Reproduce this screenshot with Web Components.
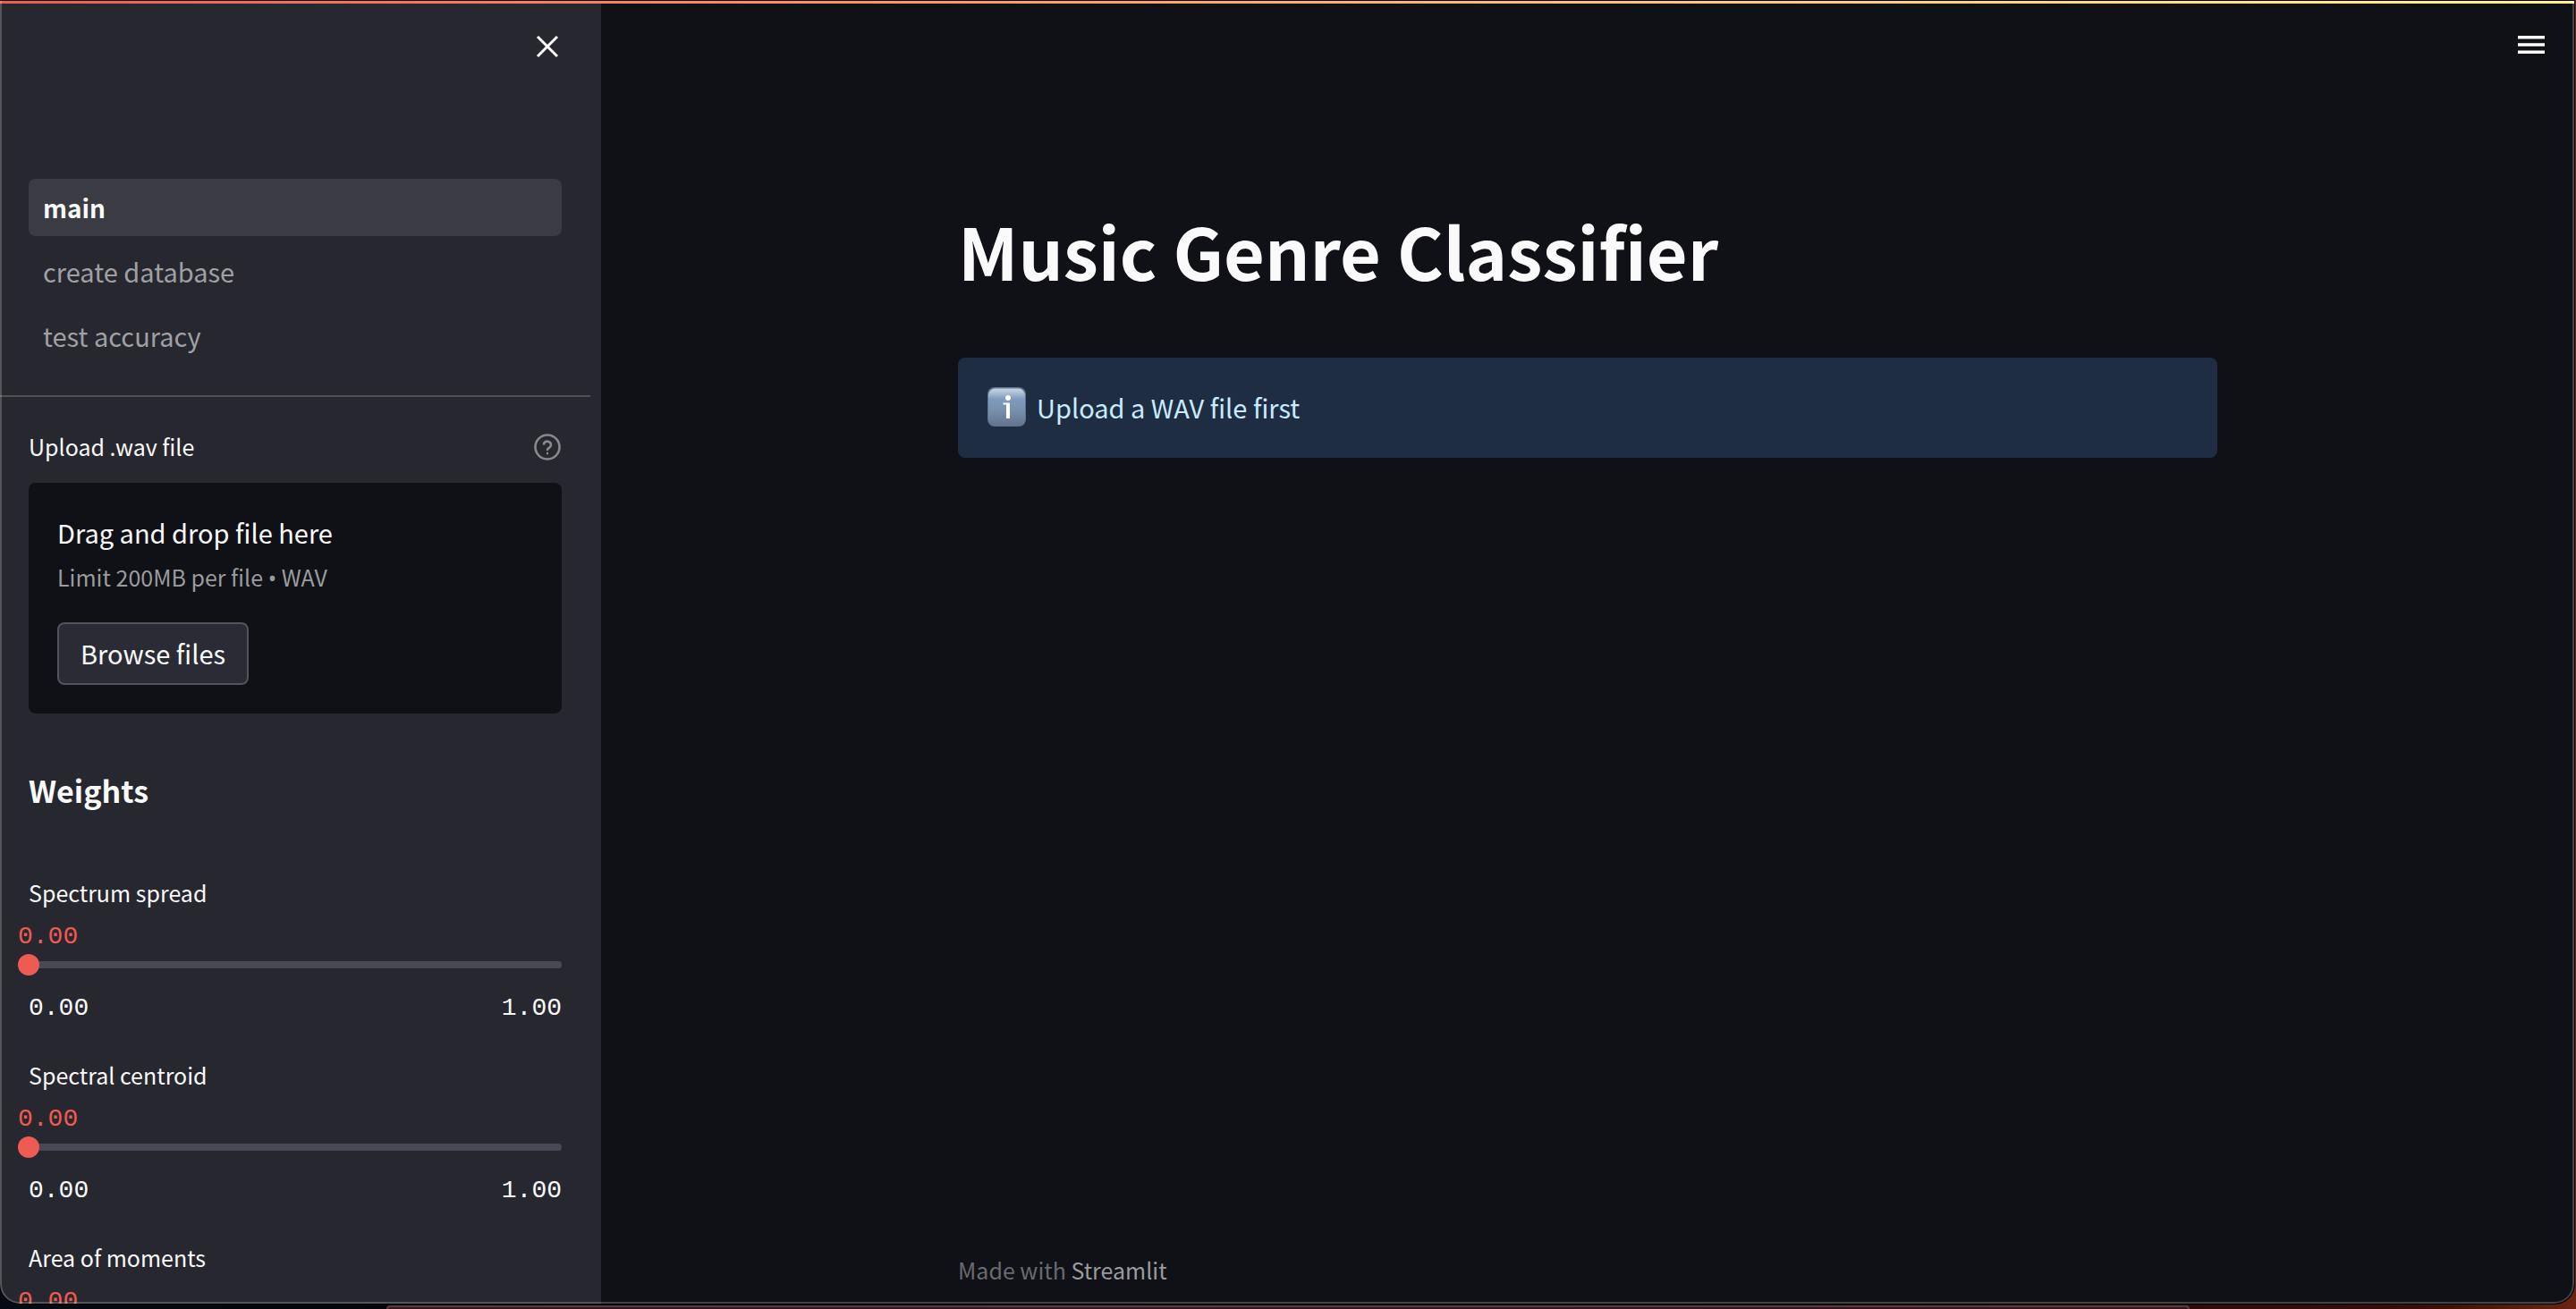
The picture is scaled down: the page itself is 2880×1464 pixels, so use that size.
<!DOCTYPE html>
<html lang="en">
<head>
<meta charset="utf-8">
<title>Music Genre Classifier</title>
<style>
  html, body { margin: 0; height: 100%; background: #000; overflow: hidden; }
  body { font-family: "Noto Sans CJK SC", "Noto Sans", sans-serif; color: #fafafa; }
</style>
</head>
<body>
<app-window>
  <side-bar slot="sidebar">
    <nav-item slot="nav" href="#main" current>main</nav-item>
    <nav-item slot="nav" href="#create">create database</nav-item>
    <nav-item slot="nav" href="#accuracy">test accuracy</nav-item>
    <file-uploader label="Upload .wav file"></file-uploader>
    <section-title>Weights</section-title>
    <weight-slider label="Spectrum spread"></weight-slider>
    <weight-slider label="Spectral centroid"></weight-slider>
    <weight-slider label="Area of moments"></weight-slider>
  </side-bar>
  <main-view>
    <page-title>Music Genre Classifier</page-title>
    <info-alert>Upload a WAV file first</info-alert>
  </main-view>
</app-window>
<script>
const define = (name, html, setup) => {
  const template = document.createElement('template');
  template.innerHTML = '<style>:host,*{box-sizing:border-box}button{font:inherit;color:inherit;cursor:pointer}svg{display:block}</style>' + html;
  customElements.define(name, class extends HTMLElement {
    connectedCallback() {
      if (this.shadowRoot) return;
      const root = this.attachShadow({ mode: 'open' });
      root.append(template.content.cloneNode(true));
      if (setup) setup(this, root);
    }
  });
};

define('app-window', `
<style>
  :host { display: block; position: relative; height: 100vh; padding: 1px 2px 6px 0; overflow: hidden;
    background: linear-gradient(90deg, #050b14 0, #040508 20%, #150506 35%, #220a08 70%, #350f08 94%, #6b2412 100%); }
  .window { position: relative; display: flex; flex-direction: column; height: 100%; overflow: hidden;
    border-radius: 0 0 22px 22px; background: #101116; box-shadow: 0 0 0 1px #000; }
  .window::after { content: ""; position: absolute; inset: 0; border: 2px solid rgba(255,255,255,.21);
    border-top: 0; border-radius: inherit; pointer-events: none; }
  .stripe { flex: none; height: 3px; background: linear-gradient(90deg, #f05a50, #ff8c61 30%, #ffc575 65%, #fff38c); }
  .body { flex: 1; display: flex; min-height: 0; }
  .dock { position: absolute; left: 15%; right: 15%; bottom: 0; height: 4px; background: #32171c;
    border: 2px solid #583a40; border-bottom: 0; border-radius: 14px 14px 0 0; }
</style>
<div class="window"><div class="stripe"></div><div class="body"><slot name="sidebar"></slot><slot></slot></div></div>
<div class="dock"></div>`);

define('side-bar', `
<style>
  :host { display: flex; flex-direction: column; flex: none; width: 672px; background: #27272f; overflow: hidden auto; scrollbar-width: none; }
  header { flex: none; height: 196px; padding: 32px 44px; display: flex; justify-content: flex-end; align-items: flex-start; }
  header button { padding: 0; border: 0; background: none; width: 32px; height: 32px; }
  nav { flex: none; display: flex; flex-direction: column; gap: 8px; padding: 0 44px 34px 32px; }
  hr { flex: none; margin: 0 12px 36px 0; border: 0; height: 2px; background: #505157; }
  .content { flex: none; padding: 0 44px 0 32px; }
</style>
<header><button aria-label="Close sidebar"><svg width="32" height="32" viewBox="0 0 32 32" fill="none" stroke="#fff" stroke-width="3"><path d="M5 5 27 27M27 5 5 27"/></svg></button></header>
<nav><slot name="nav"></slot></nav>
<hr>
<div class="content"><slot></slot></div>`);

define('nav-item', `
<style>
  :host { display: block; }
  a { display: block; height: 64px; line-height: 62px; padding: 0 16px; border-radius: 8px; font-size: 29px; color: #a0a0a4; text-decoration: none; }
  :host([current]) a { background: #3b3b44; color: #fafafa; font-size: 28px; line-height: 64px; font-weight: 700; }
</style>
<a><slot></slot></a>`, (el, root) => {
  const a = root.querySelector('a');
  a.href = el.getAttribute('href');
  if (el.hasAttribute('current')) a.setAttribute('aria-current', 'page');
});

define('file-uploader', `
<style>
  :host { display: block; margin-bottom: 62px; }
  .row { display: flex; justify-content: space-between; align-items: center; height: 40px; margin-bottom: 20px; }
  label { font-size: 25px; line-height: 40px; padding-bottom: 2px; }
  .help { padding: 0; border: 0; background: none; width: 32px; height: 32px; }
  .zone { background: #101116; border-radius: 8px; padding: 30px 32px 32px; }
  p { margin: 0; line-height: 50px; font-size: 29px; }
  .hint { font-size: 25px; color: #9b9b9d; margin-bottom: 26px; }
  .hint span { font-family: "Noto Sans", sans-serif; line-height: 1; }
  .browse { height: 70px; padding: 0 24px 2px; font-size: 29px; line-height: 48px; background: #2b2b35; border: 2px solid #52535b; border-radius: 8px; }
</style>
<div class="row"><label for="file"></label>
<button class="help" aria-label="Help"><svg width="32" height="32" viewBox="0 0 32 32" fill="none" stroke="#88888c" stroke-width="2.6" stroke-linecap="round" stroke-linejoin="round"><circle cx="16" cy="16" r="13.5"/><path d="M12 12.5a4.1 4.1 0 0 1 8 1.3c0 2.7-4 3.6-4 5.2M16 23v.1"/></svg></button></div>
<div class="zone"><p>Drag and drop file here</p><p class="hint">Limit 200MB per file <span>•</span> WAV</p>
<input type="file" id="file" accept=".wav" hidden><button class="browse">Browse files</button></div>`, (el, root) => {
  root.querySelector('label').textContent = el.getAttribute('label');
  root.querySelector('.browse').onclick = () => root.querySelector('input').click();
});

define('section-title', `
<style>
  :host { display: block; margin-bottom: 70px; }
  h2 { margin: 0; font-size: 34px; line-height: 48px; font-weight: 700; }
</style>
<h2><slot></slot></h2>`);

define('weight-slider', `
<style>
  :host { display: block; margin-bottom: 36px; }
  label { display: block; font-size: 25px; line-height: 40px; margin-bottom: 12px; }
  output, .range { font-family: "Liberation Mono", monospace; font-size: 28px; line-height: 36px; }
  .control { display: grid; margin: 0 -12px; }
  output { color: #ef5a53; }
  .rail, input { grid-area: 2 / 1; }
  .rail { align-self: center; height: 8px; margin: 0 12px; border-radius: 4px; background: #484955; }
  input { appearance: none; width: 100%; height: 26px; margin: 0; background: none; }
  input::-webkit-slider-runnable-track { background: none; height: 24px; }
  input::-webkit-slider-thumb { appearance: none; width: 24px; height: 24px; border-radius: 50%; background: #ef5a53; }
  .range { display: flex; justify-content: space-between; margin-top: 18px; }
</style>
<label for="value"></label>
<div class="control"><output for="value">0.00</output><span class="rail"></span><input id="value" type="range" min="0" max="1" step="0.01" value="0"></div>
<div class="range"><span>0.00</span><span>1.00</span></div>`, (el, root) => {
  root.querySelector('label').textContent = el.getAttribute('label');
  const input = root.querySelector('input');
  input.oninput = () => { root.querySelector('output').value = Number(input.value).toFixed(2); };
});

define('main-view', `
<style>
  :host { flex: 1; min-width: 0; display: flex; flex-direction: column; }
  header { flex: none; height: 228px; padding: 30px 30px; display: flex; justify-content: flex-end; align-items: flex-start; }
  header button { padding: 0; border: 0; background: none; width: 36px; height: 32px; }
  main, footer { width: 100%; max-width: 1408px; margin: 0 auto; }
  main { flex: 1; }
  footer { font-size: 25px; line-height: 40px; padding-bottom: 18px; color: #696a6e; }
  a { color: #9a9b9d; text-decoration: none; }
</style>
<header><button aria-label="Menu"><svg width="36" height="32" viewBox="0 0 36 32" fill="#fff"><path d="M3 6h30v3.5H3zM3 14.2h30v3.5H3zM3 22.5h30V26H3z"/></svg></button></header>
<main><slot></slot></main>
<footer>Made with <a href="#streamlit">Streamlit</a></footer>`);

define('page-title', `
<style>
  :host { display: block; margin-bottom: 72px; }
  h1 { margin: 0; font-size: 79px; line-height: 96px; font-weight: 700; }
</style>
<h1><slot></slot></h1>`);

define('info-alert', `
<style>
  :host { display: flex; align-items: center; gap: 12px; padding: 31px 32px 33px; border-radius: 8px; background: #1f2d43; color: #c7ebff; font-size: 29px; line-height: 48px; }
</style>
<svg width="44" height="44" viewBox="0 0 44 44" role="img" aria-label="Information">
  <defs><linearGradient id="g" x2="0" y2="1"><stop offset="0" stop-color="#c5d2df"/><stop offset=".1" stop-color="#b3c4d6"/><stop offset=".28" stop-color="#7f9bbd"/><stop offset=".6" stop-color="#7890ab"/><stop offset="1" stop-color="#63748c"/></linearGradient></defs>
  <rect x="1" width="43" height="44" rx="8" fill="#5d7390"/><rect x="2" y="1.5" width="41" height="41.5" rx="7.5" fill="url(#g)"/>
  <circle cx="24" cy="12" r="3" fill="#fff"/><path d="M18.5 17.5H26V35h-4V19.5h-3.5z" fill="#fff"/>
</svg>
<span><slot></slot></span>`);
</script>
</body>
</html>
